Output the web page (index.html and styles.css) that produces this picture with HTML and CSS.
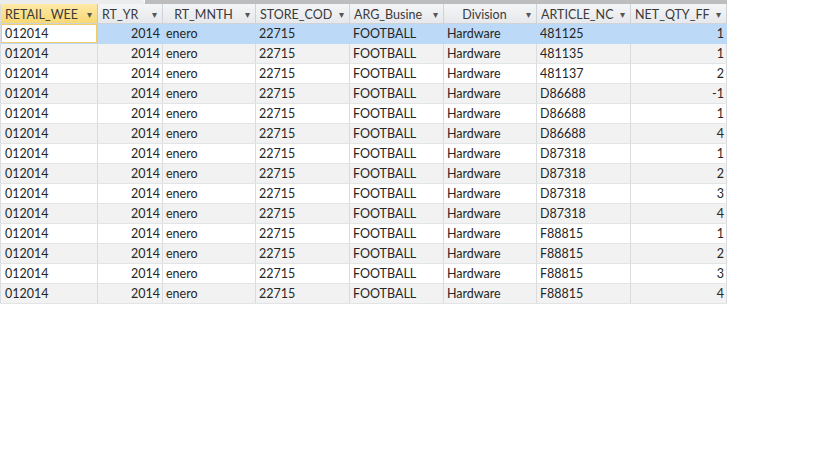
FILE: index.html
```html
<!DOCTYPE html>
<html>
<head>
<meta charset="utf-8">
<link rel="stylesheet" href="styles.css">
</head>
<body>
<div class="sheet">
  <div class="topbar"><div class="tab"></div><div class="rest"></div></div>
  <table class="grid">
    <colgroup>
      <col style="width:97px"><col style="width:65px"><col style="width:93px"><col style="width:94px"><col style="width:94px"><col style="width:93px"><col style="width:94px"><col style="width:96px">
    </colgroup>
    <thead>
      <tr>
        <th class="sel"><span class="lbl">RETAIL_WEE</span><span class="arr">▾</span></th>
        <th><span class="lbl">RT_YR</span><span class="arr">▾</span></th>
        <th><span class="lbl c">RT_MNTH</span><span class="arr">▾</span></th>
        <th><span class="lbl">STORE_COD</span><span class="arr">▾</span></th>
        <th><span class="lbl">ARG_Busine</span><span class="arr">▾</span></th>
        <th><span class="lbl c">Division</span><span class="arr">▾</span></th>
        <th><span class="lbl">ARTICLE_NC</span><span class="arr">▾</span></th>
        <th><span class="lbl">NET_QTY_FF</span><span class="arr">▾</span></th>
      </tr>
    </thead>
    <tbody id="rows">
      <tr class="hl"><td class="active">012014</td><td class="n">2014</td><td>enero</td><td>22715</td><td>FOOTBALL</td><td>Hardware</td><td>481125</td><td class="n">1</td></tr>
      <tr><td>012014</td><td class="n">2014</td><td>enero</td><td>22715</td><td>FOOTBALL</td><td>Hardware</td><td>481135</td><td class="n">1</td></tr>
      <tr><td>012014</td><td class="n">2014</td><td>enero</td><td>22715</td><td>FOOTBALL</td><td>Hardware</td><td>481137</td><td class="n">2</td></tr>
      <tr><td>012014</td><td class="n">2014</td><td>enero</td><td>22715</td><td>FOOTBALL</td><td>Hardware</td><td>D86688</td><td class="n">-1</td></tr>
      <tr><td>012014</td><td class="n">2014</td><td>enero</td><td>22715</td><td>FOOTBALL</td><td>Hardware</td><td>D86688</td><td class="n">1</td></tr>
      <tr><td>012014</td><td class="n">2014</td><td>enero</td><td>22715</td><td>FOOTBALL</td><td>Hardware</td><td>D86688</td><td class="n">4</td></tr>
      <tr><td>012014</td><td class="n">2014</td><td>enero</td><td>22715</td><td>FOOTBALL</td><td>Hardware</td><td>D87318</td><td class="n">1</td></tr>
      <tr><td>012014</td><td class="n">2014</td><td>enero</td><td>22715</td><td>FOOTBALL</td><td>Hardware</td><td>D87318</td><td class="n">2</td></tr>
      <tr><td>012014</td><td class="n">2014</td><td>enero</td><td>22715</td><td>FOOTBALL</td><td>Hardware</td><td>D87318</td><td class="n">3</td></tr>
      <tr><td>012014</td><td class="n">2014</td><td>enero</td><td>22715</td><td>FOOTBALL</td><td>Hardware</td><td>D87318</td><td class="n">4</td></tr>
      <tr><td>012014</td><td class="n">2014</td><td>enero</td><td>22715</td><td>FOOTBALL</td><td>Hardware</td><td>F88815</td><td class="n">1</td></tr>
      <tr><td>012014</td><td class="n">2014</td><td>enero</td><td>22715</td><td>FOOTBALL</td><td>Hardware</td><td>F88815</td><td class="n">2</td></tr>
      <tr><td>012014</td><td class="n">2014</td><td>enero</td><td>22715</td><td>FOOTBALL</td><td>Hardware</td><td>F88815</td><td class="n">3</td></tr>
      <tr><td>012014</td><td class="n">2014</td><td>enero</td><td>22715</td><td>FOOTBALL</td><td>Hardware</td><td>F88815</td><td class="n">4</td></tr>
    </tbody>
  </table>
</div>
</body>
</html>
```
FILE: styles.css
```css
html, body {
  margin: 0;
  padding: 0;
  background: #ffffff;
}
.sheet {
  width: 727px;
  font-family: Lato, "Open Sans", "Liberation Sans", sans-serif;
  font-size: 12.5px;
}
.topbar {
  display: flex;
  height: 4px;
}
.tab {
  width: 145px;
  background: #ececec;
  border-top-right-radius: 6px;
}
.rest {
  flex: 1;
  background: #bdbdbd;
}
.grid {
  border-collapse: collapse;
  table-layout: fixed;
  width: 727px;
}
.grid th {
  height: 19px;
  padding: 0 3px 0 4px;
  background: linear-gradient(#f4f5f7, #e6e8eb);
  border-right: 1px solid #cfd2d6;
  border-bottom: 1px solid #cfd2d6;
  font-weight: normal;
  color: #3a3a3a;
  text-align: left;
  white-space: nowrap;
  overflow: hidden;
}
.grid th.sel {
  background: linear-gradient(#fde9a6, #f8d874);
  border-right-color: #e6c766;
}
.grid th .lbl {
  display: inline-block;
  width: calc(100% - 12px);
  overflow: hidden;
  white-space: nowrap;
  vertical-align: middle;
}
.grid th .lbl.c {
  text-align: center;
}
.grid th .arr {
  display: inline-block;
  width: 10px;
  font-size: 10px;
  color: #555;
  text-align: right;
  vertical-align: middle;
}
.grid td {
  height: 19px;
  padding: 0 3px 0 3px;
  border-right: 1px solid #d9dbde;
  border-bottom: 1px solid #e3e4e6;
  color: #262626;
  white-space: nowrap;
  overflow: hidden;
}
.grid td:first-child {
  padding-left: 4px;
}
.grid td.n {
  text-align: right;
  padding-right: 2px;
}
.grid tbody tr:nth-child(even) td {
  background: #f2f2f2;
}
.grid tbody tr.hl td {
  background: #bcdaf7;
  border-right-color: #bcdaf7;
  border-bottom-color: #bcdaf7;
}
.grid tbody tr.hl td.active {
  background: #ffffff;
  box-shadow: inset 0 0 0 1px #f0cd68;
  border-right-color: #f0cd68;
}
.grid td:first-child, .grid th:first-child {
  border-left: 1px solid #d9dbde;
}
```
